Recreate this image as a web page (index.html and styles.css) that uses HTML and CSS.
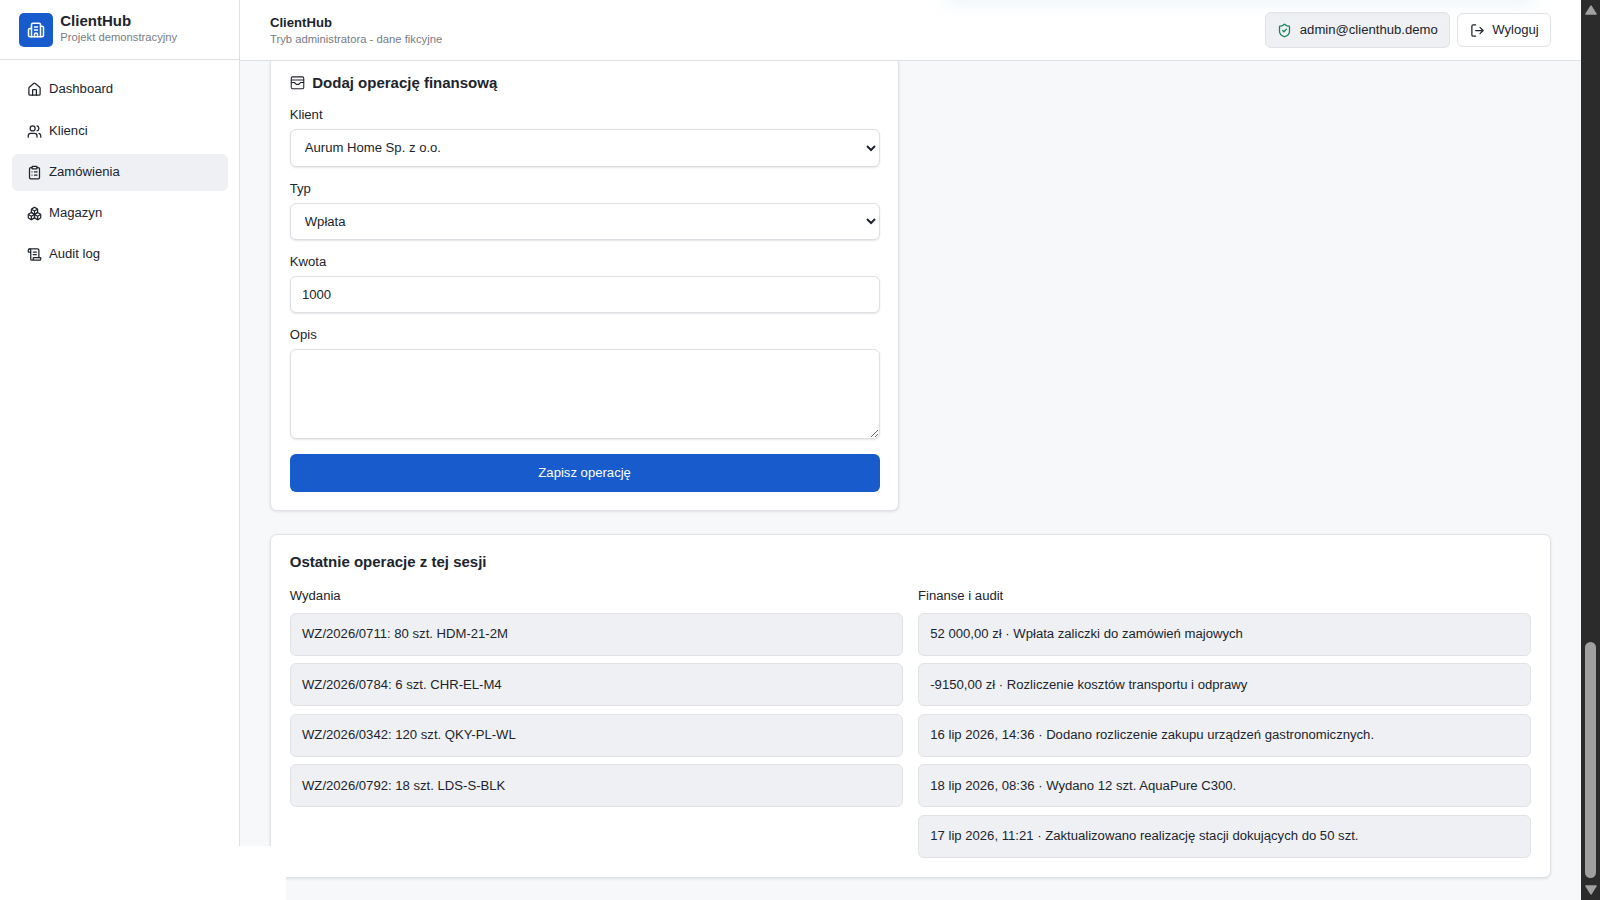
FILE: index.html
```html
<!DOCTYPE html>
<html lang="pl">
<head>
  <meta charset="utf-8" />
  <title>ClientHub</title>
  <link rel="stylesheet" href="styles.css">
</head>
<body>

  <aside class="sidebar">
    <div class="brand">
      <div class="brand-logo">
        <svg class="icon" viewBox="0 0 24 24"><path d="M10 12h4M10 8h4M14 21v-3a2 2 0 0 0-4 0v3"/><path d="M6 10H4a2 2 0 0 0-2 2v7a2 2 0 0 0 2 2h16a2 2 0 0 0 2-2V9a2 2 0 0 0-2-2h-2"/><path d="M6 21V5a2 2 0 0 1 2-2h8a2 2 0 0 1 2 2v16"/></svg>
      </div>
      <div>
        <div class="brand-name">ClientHub</div>
        <div class="brand-sub">Projekt demonstracyjny</div>
      </div>
    </div>
    <nav class="nav">
      <a class="nav-item">
        <svg class="icon" viewBox="0 0 24 24"><path d="M15 21v-8a1 1 0 0 0-1-1h-4a1 1 0 0 0-1 1v8"/><path d="M3 10a2 2 0 0 1 .709-1.528l7-6a2 2 0 0 1 2.582 0l7 6A2 2 0 0 1 21 10v9a2 2 0 0 1-2 2H5a2 2 0 0 1-2-2z"/></svg>
        <span>Dashboard</span>
      </a>
      <a class="nav-item">
        <svg class="icon" viewBox="0 0 24 24"><path d="M16 21v-2a4 4 0 0 0-4-4H6a4 4 0 0 0-4 4v2"/><circle cx="9" cy="7" r="4"/><path d="M22 21v-2a4 4 0 0 0-3-3.870M16 3.130a4 4 0 0 1 0 7.750"/></svg>
        <span>Klienci</span>
      </a>
      <a class="nav-item active">
        <svg class="icon" viewBox="0 0 24 24"><rect width="8" height="4" x="8" y="2" rx="1"/><path d="M16 4h2a2 2 0 0 1 2 2v14a2 2 0 0 1-2 2H6a2 2 0 0 1-2-2V6a2 2 0 0 1 2-2h2"/><path d="M12 11h4M12 16h4M8 11h.01M8 16h.01"/></svg>
        <span>Zamówienia</span>
      </a>
      <a class="nav-item">
        <svg class="icon" viewBox="0 0 24 24"><path d="M2.97 12.92A2 2 0 0 0 2 14.63v3.24a2 2 0 0 0 .97 1.71l3 1.8a2 2 0 0 0 2.06 0L12 19v-5.5l-5-3-4.03 2.42Z"/><path d="m7 16.5-4.74-2.85M7 16.5l5-3M7 16.5v5.17"/><path d="M12 13.5V19l3.97 2.38a2 2 0 0 0 2.06 0l3-1.8a2 2 0 0 0 .97-1.71v-3.24a2 2 0 0 0-.97-1.71L17 10.5l-5 3Z"/><path d="m17 16.5-5-3M17 16.5l4.74-2.85M17 16.5v5.17"/><path d="M7.97 4.42A2 2 0 0 0 7 6.13v4.37l5 3 5-3V6.13a2 2 0 0 0-.97-1.71l-3-1.8a2 2 0 0 0-2.06 0l-3 1.8Z"/><path d="M12 8 7.26 5.15M12 8l4.74-2.85M12 13.5V8"/></svg>
        <span>Magazyn</span>
      </a>
      <a class="nav-item">
        <svg class="icon" viewBox="0 0 24 24"><path d="M15 12h-5M15 8h-5M19 17V5a2 2 0 0 0-2-2H4"/><path d="M8 21h12a2 2 0 0 0 2-2v-1a1 1 0 0 0-1-1H11a1 1 0 0 0-1 1v1a2 2 0 1 1-4 0V5a2 2 0 1 0-4 0v2a1 1 0 0 0 1 1h3"/></svg>
        <span>Audit log</span>
      </a>
    </nav>
  </aside>

  <div class="page">
    <header class="topbar">
      <div>
        <div class="topbar-title">ClientHub</div>
        <div class="topbar-sub">Tryb administratora - dane fikcyjne</div>
      </div>
      <div class="topbar-actions">
        <div class="user">
          <svg class="icon" viewBox="0 0 24 24"><path d="M20 13c0 5-3.5 7.500-7.660 8.950a1 1 0 0 1-.670-.010C7.500 20.500 4 18 4 13V6a1 1 0 0 1 1-1c2 0 4.500-1.200 6.240-2.720a1.170 1.170 0 0 1 1.520 0C14.510 3.810 17 5 19 5a1 1 0 0 1 1 1z"/><path d="m9 12 2 2 4-4"/></svg>
          <span>admin@clienthub.demo</span>
        </div>
        <button class="logout">
          <svg class="icon" viewBox="0 0 24 24"><path d="m16 17 5-5-5-5M21 12H9M9 21H5a2 2 0 0 1-2-2V5a2 2 0 0 1 2-2h4"/></svg>
          <span>Wyloguj</span>
        </button>
      </div>
    </header>

    <main class="content">
      <div class="columns">
        <form class="card form">
          <h2>
            <svg class="icon" viewBox="0 0 24 24"><rect width="20" height="19" x="2" y="3" rx="2"/><path d="M2 8h20M2 12h5l3 3h4l3-3h5"/></svg>
            <span>Dodaj operację finansową</span>
          </h2>
          <div class="field">
            <label for="client">Klient</label>
            <select id="client"><option>Aurum Home Sp. z o.o.</option></select>
          </div>
          <div class="field">
            <label for="type">Typ</label>
            <select id="type"><option>Wpłata</option></select>
          </div>
          <div class="field">
            <label for="amount">Kwota</label>
            <input id="amount" value="1000">
          </div>
          <div class="field">
            <label for="desc">Opis</label>
            <textarea id="desc"></textarea>
          </div>
          <button class="save" type="button">Zapisz operację</button>
        </form>
      </div>

      <section class="card">
        <h2>Ostatnie operacje z tej sesji</h2>
        <div class="history">
          <div class="list">
            <h3>Wydania</h3>
            <div class="entry">WZ/2026/0711: 80 szt. HDM-21-2M</div>
            <div class="entry">WZ/2026/0784: 6 szt. CHR-EL-M4</div>
            <div class="entry">WZ/2026/0342: 120 szt. QKY-PL-WL</div>
            <div class="entry">WZ/2026/0792: 18 szt. LDS-S-BLK</div>
          </div>
          <div class="list">
            <h3>Finanse i audit</h3>
            <div class="entry">52 000,00 zł · Wpłata zaliczki do zamówień majowych</div>
            <div class="entry">-9150,00 zł · Rozliczenie kosztów transportu i odprawy</div>
            <div class="entry">16 lip 2026, 14:36 · Dodano rozliczenie zakupu urządzeń gastronomicznych.</div>
            <div class="entry">18 lip 2026, 08:36 · Wydano 12 szt. AquaPure C300.</div>
            <div class="entry">17 lip 2026, 11:21 · Zaktualizowano realizację stacji dokujących do 50 szt.</div>
          </div>
        </div>
      </section>
    </main>
  </div>

  <div class="scrollbar">
    <svg class="arrow" viewBox="0 0 12 10"><path d="M6 1.500 10.500 8.500h-9z"/></svg>
    <div class="thumb"></div>
    <svg class="arrow" viewBox="0 0 12 10"><path d="M6 8.500 1.500 1.500h9z"/></svg>
  </div>

  <div class="glow"></div>
  <div class="status"></div>

</body>
</html>
```

FILE: styles.css
```css
* {
  box-sizing: border-box;
}

html {
  font-size: 15px;
}

body {
  margin: 0;
  height: 100vh;
  overflow: hidden;
  display: flex;
  font-family: "Liberation Sans", Arial, sans-serif;
  font-size: 0.875rem;
  line-height: 1.25rem;
  color: #20242e;
  background-color: #f6f8fa;
}

h2, h3 {
  margin: 0;
}

.icon {
  width: 1rem;
  height: 1rem;
  flex-shrink: 0;
  fill: none;
  stroke: currentColor;
  stroke-width: 2;
  stroke-linecap: round;
  stroke-linejoin: round;
}

/* sidebar */
.sidebar {
  width: 240px;
  flex-shrink: 0;
  background-color: #fff;
  border-right: 1px solid #dcdfe3;
}

.brand {
  height: 60px;
  padding: 0 1.25rem;
  display: flex;
  align-items: center;
  gap: 0.5rem;
  border-bottom: 1px solid #dcdfe3;
}

.brand-logo {
  width: 34px;
  height: 34px;
  border-radius: 5px;
  display: flex;
  align-items: center;
  justify-content: center;
  color: #fff;
  background-color: #175bcc;
}

.brand-logo .icon {
  width: 1.2rem;
  height: 1.2rem;
}

.brand-name {
  font-size: 1rem;
  font-weight: bold;
  line-height: 1.25rem;
}

.brand-sub, .topbar-sub {
  font-size: 0.75rem;
  line-height: 1rem;
  color: #777b84;
}

.brand-sub {
  padding-bottom: 2px;
}

.nav {
  padding: 11px 11px 0 12px;
  display: flex;
  flex-direction: column;
  gap: 0.25rem;
}

.nav-item {
  height: 2.5rem;
  padding: 0 1rem;
  display: flex;
  align-items: center;
  gap: 7px;
  border-radius: 6px;
}

.nav-item.active {
  background-color: #eef0f3;
}

/* top bar */
.page {
  flex: 1;
  min-width: 0;
  display: flex;
  flex-direction: column;
}

.topbar {
  height: 61px;
  flex-shrink: 0;
  padding: 0 2rem;
  display: flex;
  align-items: center;
  justify-content: space-between;
  background-color: #fff;
  border-bottom: 1px solid #dcdfe3;
}

.topbar-title {
  font-weight: bold;
  line-height: 1.2rem;
}

.topbar-sub {
  line-height: 0.95rem;
}

.topbar-actions {
  display: flex;
  align-items: center;
  gap: 0.5rem;
}

.user, .logout {
  display: flex;
  align-items: center;
  gap: 0.5rem;
  padding: 0 0.75rem;
  font: inherit;
  color: inherit;
  border: 1px solid #dfe2e6;
  border-radius: 6px;
}

.user {
  height: 36px;
  background-color: #eef0f3;
}

.user .icon {
  color: #168558;
}

.logout {
  height: 34px;
  background-color: #fff;
}

/* content, scrolled to its end */
.content {
  flex: 1;
  min-height: 0;
  overflow: hidden;
  padding: 0 2rem 1.5rem;
  display: flex;
  flex-direction: column;
  justify-content: flex-end;
  gap: 1.5rem;
}

.columns, .history {
  display: grid;
  grid-template-columns: 1fr 1fr;
}

.columns {
  gap: 1.5rem;
}

.history {
  gap: 1rem;
  margin-top: 1.2rem;
}

.card {
  padding: 1.25rem;
  background-color: #fff;
  border: 1px solid #dfe2e6;
  border-radius: 7px;
  box-shadow: 0 1px 3px rgba(0, 0, 0, 0.1);
}

.card h2 {
  display: flex;
  align-items: center;
  gap: 0.5rem;
  font-size: 1rem;
  line-height: 1rem;
}

.card h2 .icon {
  stroke-width: 1.7;
}

.form {
  display: flex;
  flex-direction: column;
  gap: 1rem;
}

.form h2 {
  margin-bottom: 3px;
}

.field {
  display: flex;
  flex-direction: column;
  gap: 0.5rem;
}

.field label {
  line-height: 0.89rem;
}

select, input, textarea {
  width: 100%;
  height: 2.5rem;
  margin: 0;
  padding: 0 0.75rem;
  font: inherit;
  color: inherit;
  background-color: #fff;
  border: 1px solid #dcdfe3;
  border-radius: 6px;
  box-shadow: 0 1px 2px rgba(0, 0, 0, 0.1);
}

select {
  padding: 0 10px;
}

textarea {
  height: 6rem;
}

.save {
  height: 2.5rem;
  font: inherit;
  color: #fff;
  background-color: #175bcc;
  border: none;
  border-radius: 6px;
}

.list {
  display: flex;
  flex-direction: column;
  gap: 0.5rem;
}

.list h3 {
  font-size: 0.875rem;
  font-weight: normal;
}

.entry {
  padding: 0.75rem;
  line-height: 1.23rem;
  background-color: #eef0f3;
  border: 1px solid #e0e2e6;
  border-radius: 6px;
}

/* scrollbar */
.scrollbar {
  width: 19px;
  flex-shrink: 0;
  padding: 4px 0;
  display: flex;
  flex-direction: column;
  align-items: center;
  background-color: #2b2b2b;
}

.arrow {
  width: 14px;
  height: 12px;
  fill: #a0a0a0;
  stroke: #a0a0a0;
  stroke-linejoin: round;
}

.thumb {
  width: 11px;
  height: 236px;
  margin-top: auto;
  margin-bottom: 6px;
  border-radius: 6px;
  background-color: #a0a0a0;
}

/* browser popups over the page */
.glow {
  position: fixed;
  top: -20px;
  left: 950px;
  width: 580px;
  height: 20px;
  box-shadow: 0 0 18px 5px rgba(215, 230, 242, 0.4);
}

.status {
  position: fixed;
  left: 0;
  bottom: 0;
  width: 286px;
  height: 54px;
  background-color: #fff;
}
```
